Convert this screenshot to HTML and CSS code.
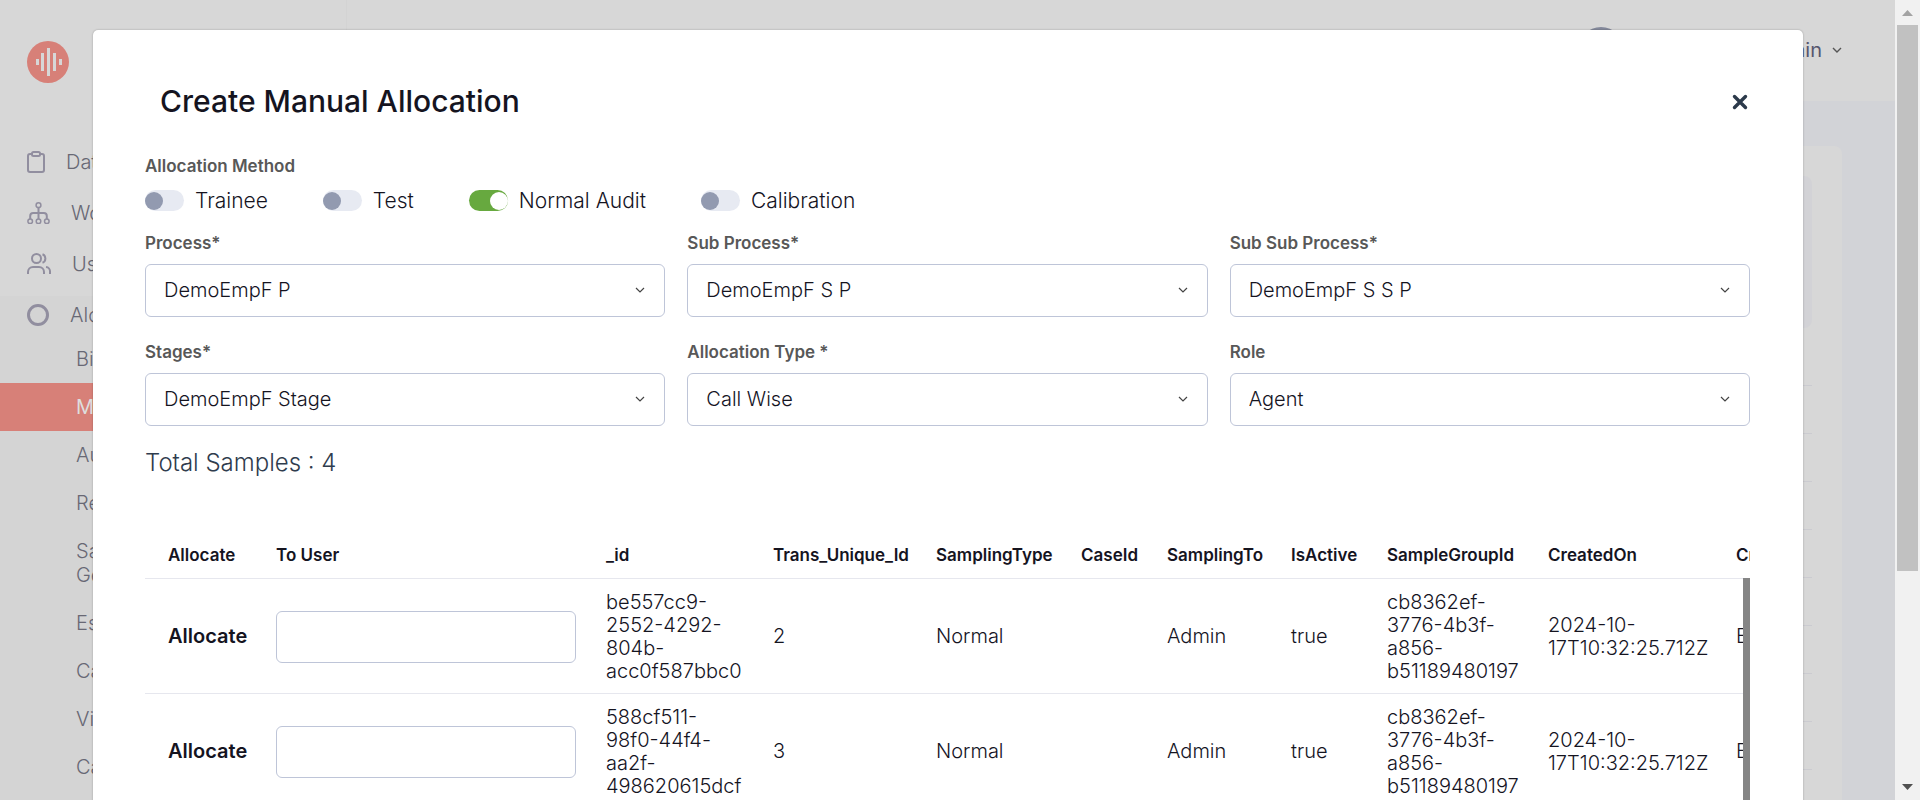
FILE: index.html
```html
<!DOCTYPE html>
<html lang="en">
<head>
<meta charset="utf-8">
<title>Create Manual Allocation</title>
<link rel="stylesheet" href="styles.css">
</head>
<body>
<div class="page">
  <div class="app">
    <aside class="sidebar">
      <svg class="logo" viewBox="0 0 42 42" width="42" height="42" aria-hidden="true">
        <circle cx="21" cy="21" r="21" fill="#d78078"/>
        <g fill="#d7d7d7"><rect x="9" y="18" width="3" height="6"/><rect x="14" y="12" width="3" height="18"/><rect x="20" y="7" width="3" height="28"/><rect x="26" y="12" width="3" height="18"/><rect x="32" y="18" width="3" height="6"/></g>
      </svg>
      <nav class="nav">
        <a class="nav-item" href="#">
          <svg class="icon-clipboard" viewBox="0 0 18 22" width="18" height="22"><g fill="none" stroke="#918e9f" stroke-width="2"><path d="M5 3H3a2 2 0 0 0-2 2v14a2 2 0 0 0 2 2h12a2 2 0 0 0 2-2V5a2 2 0 0 0-2-2h-2"/><rect x="5" y="1" width="8" height="4" rx="1.5"/></g></svg>Data</a>
        <a class="nav-item" href="#">
          <svg class="icon-tree" viewBox="0 0 23 22" width="23" height="22"><g fill="none" stroke="#918e9f" stroke-width="1.5"><circle cx="11.500" cy="3.200" r="2.400"/><circle cx="3.200" cy="19.300" r="2.300"/><circle cx="11.500" cy="19.300" r="2.300"/><circle cx="19.800" cy="19.300" r="2.300"/><path d="M11.500 5.600V17M3.200 17v-3a3 3 0 0 1 3-3h10.600a3 3 0 0 1 3 3v3" stroke-width="2"/></g></svg>Work</a>
        <a class="nav-item" href="#">
          <svg class="icon-users" viewBox="0 0 24 21" width="24" height="21"><g fill="none" stroke="#918e9f" stroke-width="2"><circle cx="9.500" cy="5.500" r="4.500"/><path d="M1 21v-2a5 5 0 0 1 5-5h6a5 5 0 0 1 5 5v2M15.500 1.300a4.500 4.500 0 0 1 0 8.400M19 14.100a4.500 4.500 0 0 1 4 4.900v2"/></g></svg>Users</a>
        <a class="nav-item" href="#">
          <svg class="icon-ring" viewBox="0 0 22 22" width="22" height="22"><circle cx="11" cy="11" r="9.500" fill="none" stroke="#918e9f" stroke-width="3"/></svg>Aloc</a>
      </nav>
      <nav class="subnav">
        <a href="#">Bin</a>
        <a href="#" class="active">Manual</a>
        <a href="#">Audit</a>
        <a href="#">Rest</a>
        <a href="#">Sam<br>Gen</a>
        <a href="#">Esc</a>
        <a href="#">Calib</a>
        <a href="#">View</a>
        <a href="#">Calls</a>
      </nav>
    </aside>
    <div class="content">
      <header class="topbar">
        <span class="avatar"></span>
        <a class="account" href="#">Admin
          <svg viewBox="0 0 10 6" width="10" height="6"><path d="M1 1l4 4 4-4" fill="none" stroke="#555" stroke-width="1.400"/></svg>
        </a>
      </header>
      <main class="board">
        <section class="card">
          <div class="filters"></div>
          <ul class="lines"><li></li><li></li><li></li><li></li><li></li><li></li><li></li><li></li><li></li><li></li></ul>
        </section>
      </main>
    </div>

    <div class="overlay">
      <div class="modal" role="dialog" aria-labelledby="title">
        <div class="modal-head">
          <h1 id="title">Create Manual Allocation</h1>
          <button class="close" type="button" aria-label="Close"><svg viewBox="0 0 16 16" width="16" height="16"><path d="M2.500 2.500l11 11M13.500 2.500l-11 11" stroke="#2c3a4b" stroke-width="3.400" stroke-linecap="round"/></svg></button>
        </div>
        <fieldset class="methods">
          <legend class="label">Allocation Method</legend>
          <div class="switches">
            <label class="switch"><input type="checkbox">Trainee</label>
            <label class="switch"><input type="checkbox">Test</label>
            <label class="switch"><input type="checkbox" checked>Normal Audit</label>
            <label class="switch"><input type="checkbox">Calibration</label>
          </div>
        </fieldset>
        <div class="fields">
          <div class="field"><label class="label" for="process">Process*</label><div class="select"><select id="process"><option>DemoEmpF P</option></select><svg viewBox="0 0 10 6" width="10" height="6"><path d="M1 1l4 4 4-4" fill="none" stroke="#444" stroke-width="1.200"/></svg></div></div>
          <div class="field"><label class="label" for="sub">Sub Process*</label><div class="select"><select id="sub"><option>DemoEmpF S P</option></select><svg viewBox="0 0 10 6" width="10" height="6"><path d="M1 1l4 4 4-4" fill="none" stroke="#444" stroke-width="1.200"/></svg></div></div>
          <div class="field"><label class="label" for="subsub">Sub Sub Process*</label><div class="select"><select id="subsub"><option>DemoEmpF S S P</option></select><svg viewBox="0 0 10 6" width="10" height="6"><path d="M1 1l4 4 4-4" fill="none" stroke="#444" stroke-width="1.200"/></svg></div></div>
          <div class="field"><label class="label" for="stages">Stages*</label><div class="select"><select id="stages"><option>DemoEmpF Stage</option></select><svg viewBox="0 0 10 6" width="10" height="6"><path d="M1 1l4 4 4-4" fill="none" stroke="#444" stroke-width="1.200"/></svg></div></div>
          <div class="field"><label class="label" for="type">Allocation Type *</label><div class="select"><select id="type"><option>Call Wise</option></select><svg viewBox="0 0 10 6" width="10" height="6"><path d="M1 1l4 4 4-4" fill="none" stroke="#444" stroke-width="1.200"/></svg></div></div>
          <div class="field"><label class="label" for="role">Role</label><div class="select"><select id="role"><option>Agent</option></select><svg viewBox="0 0 10 6" width="10" height="6"><path d="M1 1l4 4 4-4" fill="none" stroke="#444" stroke-width="1.200"/></svg></div></div>
        </div>
        <p class="total">Total Samples : 4</p>
        <div class="table-wrap">
          <table>
            <colgroup><col class="c-allocate"><col class="c-user"><col class="c-id"><col class="c-trans"><col class="c-type"><col class="c-case"><col class="c-to"><col class="c-active"><col class="c-group"><col class="c-created"><col></colgroup>
            <thead>
              <tr><th>Allocate</th><th>To User</th><th>_id</th><th>Trans_Unique_Id</th><th>SamplingType</th><th>CaseId</th><th>SamplingTo</th><th>IsActive</th><th>SampleGroupId</th><th>CreatedOn</th><th>CreatedBy</th></tr>
            </thead>
            <tbody>
              <tr><td><button class="allocate" type="button">Allocate</button></td><td><input class="user" type="text" aria-label="To User"></td><td>be557cc9-2552-4292-804b-acc0f587bbc0</td><td>2</td><td>Normal</td><td></td><td>Admin</td><td>true</td><td>cb8362ef-3776-4b3f-a856-b51189480197</td><td>2024-10-17T10:32:25.712Z</td><td>E</td></tr>
              <tr><td><button class="allocate" type="button">Allocate</button></td><td><input class="user" type="text" aria-label="To User"></td><td>588cf511-98f0-44f4-aa2f-498620615dcf</td><td>3</td><td>Normal</td><td></td><td>Admin</td><td>true</td><td>cb8362ef-3776-4b3f-a856-b51189480197</td><td>2024-10-17T10:32:25.712Z</td><td>E</td></tr>
            </tbody>
          </table>
          <span class="table-scroll"></span>
        </div>
      </div>
    </div>
  </div>
  <div class="scrollbar" aria-hidden="true">
    <svg viewBox="0 0 11 6" width="11" height="6"><path d="M0 6L5.500 0 11 6z" fill="#a3a3a3"/></svg>
    <span class="thumb"></span>
    <svg viewBox="0 0 11 6" width="11" height="6"><path d="M0 0h11L5.500 6z" fill="#505050"/></svg>
  </div>
</div>
</body>
</html>
```
FILE: styles.css
```css
* { box-sizing: border-box; }
body {
  margin: 0;
  font: 300 20px/24px Inter, "Liberation Sans", sans-serif;
  color: #15141f;
  overflow: hidden;
}
a { color: inherit; text-decoration: none; }
.page { display: flex; height: 100vh; }
.app { position: relative; flex: 1; display: flex; overflow: hidden; background: #d2d3d7; }

.sidebar {
  width: 347px; border-right: 1px solid #d3d3d3; color: #686874;
  background: linear-gradient(#d7d7d7 296px, #d4d4d4 296px);
}
.logo { display: block; margin: 41px 27px 65px; }
.nav { display: flex; flex-direction: column; gap: 24px; padding-left: 27px; }
.nav-item { display: flex; align-items: center; gap: 21px; height: 27px; }
.subnav { display: flex; flex-direction: column; margin-top: 7px; }
.subnav a { padding: 12px 76px; }
.subnav .active { background: #d78078; color: #dedede; font-weight: 400; }

.content { flex: 1; display: flex; flex-direction: column; }
.topbar { flex-shrink: 0; display: flex; justify-content: flex-end; gap: 138px; height: 101px; padding: 27px 53px 0 0; background: #d7d7d7; }
.avatar { width: 46px; height: 46px; border-radius: 50%; background: #858a9c; }
.account { display: flex; align-items: center; gap: 10px; height: 46px; font-weight: 400; color: #55566e; }
.board { flex: 1; min-height: 0; padding: 45px 53px 0; }
.card { height: 100%; padding: 30px 30px 0; background: #d7d7d7; border-radius: 8px 8px 0 0; }
.filters { height: 152px; border-radius: 8px; background: #d2d2d6; }
.lines { margin: 10px 0 0; padding: 0; list-style: none; }
.lines li { height: 48px; border-bottom: 1px solid #cbcbd0; }

.overlay { position: absolute; inset: 0; padding: 30px 92px 0 93px; overflow: hidden; }
.modal { min-height: 100%; padding: 52px 53px 52px 52px; border-radius: 5px; background: #fff; box-shadow: 0 0 2px rgba(0, 0, 0, .3); }
.modal-head { display: flex; justify-content: space-between; align-items: center; padding-left: 15px; }
h1 { margin: 0; font-size: 30px; line-height: 39px; font-weight: 500; }
.close { width: 20px; height: 20px; padding: 0; border: 0; background: none; display: grid; place-items: center; }
.label { display: block; padding: 0; font-size: 17px; line-height: 20px; font-weight: 600; color: #585858; }
.methods { margin: 35px 0 0; padding: 0; border: 0; }
.switches { display: flex; gap: 55px; margin-top: 10px; }
.switch { display: flex; align-items: center; gap: 11px; font-size: 21px; line-height: 29px; }
.switch input { appearance: none; width: 39px; height: 21px; margin: 0; border-radius: 11px; background: #e7eaf2; display: flex; align-items: center; }
.switch input::before { content: ""; width: 18px; height: 18px; border-radius: 50%; background: #929ab0; }
.switch input:checked { background: #67a93f; justify-content: flex-end; }
.switch input:checked::before { background: #fff; }

.fields { display: grid; grid-template-columns: repeat(3, 1fr); gap: 25px 22px; margin-top: 18px; }
.field { display: flex; flex-direction: column; gap: 11px; }
.select { position: relative; }
select, .user {
  width: 100%; height: 53px; padding: 0 18px 2px; border: 1px solid #bec5d8; border-radius: 6px;
  background: #fff; color: inherit; font: inherit; appearance: none;
}
.select svg { position: absolute; right: 20px; top: 23px; }
.total { margin: 22px 0 53px; font-size: 24px; line-height: 30px; color: #2f3c4e; }

.table-wrap { position: relative; overflow: hidden; }
table { width: 1720px; table-layout: fixed; border-collapse: collapse; }
.c-allocate { width: 116px; }
.c-user { width: 330px; }
.c-id { width: 167px; }
.c-trans { width: 163px; }
.c-type { width: 145px; }
.c-case { width: 86px; }
.c-to { width: 124px; }
.c-active { width: 96px; }
.c-group { width: 161px; }
.c-created { width: 188px; }
th, td { padding: 12px 15px 10px; text-align: left; border-bottom: 1px solid #e6e7ee; line-height: 23px; }
th { height: 47px; font-size: 17px; font-weight: 600; white-space: nowrap; }
th:first-child, td:first-child { padding-left: 23px; padding-right: 0; }
.allocate { display: block; padding: 0; border: 0; background: none; font: inherit; font-weight: 600; color: inherit; }
.user { display: block; width: 300px; height: 52px; }
.table-scroll { position: absolute; right: 0; top: 47px; bottom: 0; width: 7px; background: #858585; }

.scrollbar { width: 25px; padding: 10px 0; display: flex; flex-direction: column; align-items: center; background: #f1f1f1; }
.thumb { width: 21px; margin: 9px 0 auto; height: 70%; background: #c1c1c1; }
```
